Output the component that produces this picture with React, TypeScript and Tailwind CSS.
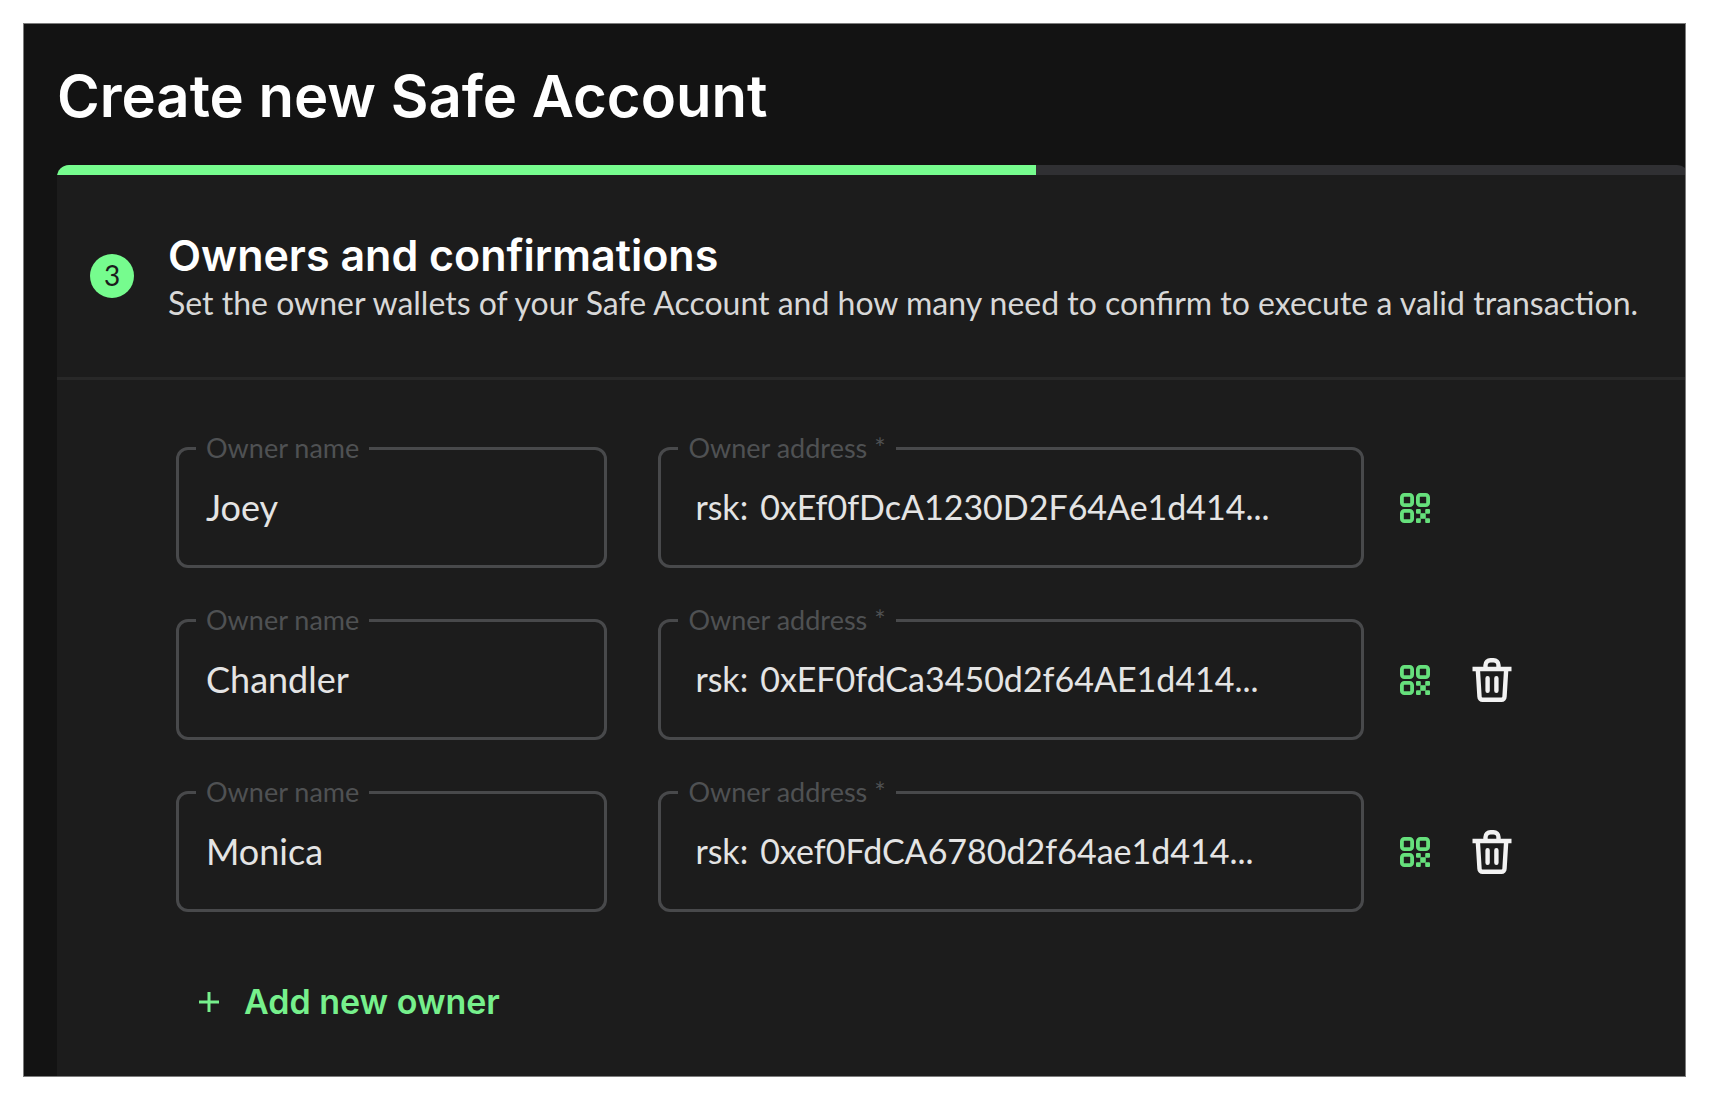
import React, { useState } from 'react';

interface Owner {
  id: number;
  name: string;
  address: string;
}

// ─── Data ──────────────────────────────────────────────────────

const STEP = 3;
const TOTAL_STEPS = 5;

const INITIAL_OWNERS: Owner[] = [
  { id: 1, name: 'Joey', address: '0xEf0fDcA1230D2F64Ae1d414...' },
  { id: 2, name: 'Chandler', address: '0xEF0fdCa3450d2f64AE1d414...' },
  { id: 3, name: 'Monica', address: '0xef0FdCA6780d2f64ae1d414...' },
];

// ─── Icons ─────────────────────────────────────────────────────

function QrIcon() {
  return (
    <svg viewBox="0 0 30 30" className="w-[30px] h-[30px]" aria-hidden="true">
      <g fill="none" stroke="currentColor" strokeWidth="3.8">
        <rect x="1.9" y="1.9" width="10.2" height="10.2" rx="2.4" />
        <rect x="17.9" y="1.9" width="10.2" height="10.2" rx="2.4" />
        <rect x="1.9" y="17.9" width="10.2" height="10.2" rx="2.4" />
      </g>
      <g fill="currentColor">
        <rect x="16" y="16" width="4.8" height="4.8" rx="1" />
        <rect x="25.2" y="16" width="4.8" height="4.8" rx="1" />
        <rect x="20.2" y="20.2" width="5.6" height="5.6" />
        <rect x="16" y="25.2" width="4.8" height="4.8" rx="1" />
        <rect x="25.2" y="25.2" width="4.8" height="4.8" rx="1" />
      </g>
    </svg>
  );
}

function TrashIcon() {
  return (
    <svg viewBox="0 0 40 44" className="w-10 h-11" fill="none" stroke="currentColor" strokeWidth="4.4" strokeLinejoin="round" aria-hidden="true">
      <path d="M0.5 11h39" />
      <path d="M13.5 11V7.200a5 5 0 0 1 5-5h3a5 5 0 0 1 5 5V11" />
      <path d="M5.800 11l1.700 27.800a3 3 0 0 0 3 3h19a3 3 0 0 0 3-3L34.200 11" />
      <path strokeLinecap="round" d="M15.600 20.200v12.600M24.400 20.200v12.600" />
    </svg>
  );
}

// ─── Field ─────────────────────────────────────────────────────

interface FieldProps {
  id: string;
  label: string;
  value: string;
  prefix?: string;
  className: string;
  onChange: (value: string) => void;
}

function Field({ id, label, value, prefix, className, onChange }: FieldProps) {
  return (
    <fieldset className={`min-w-0 rounded-xl border-3 border-[#48494b] focus-within:border-[#76fc8e] ${className}`}>
      <legend className="ml-[17px] px-[10px] text-[27px] leading-8 text-[#4f5153]">
        <label htmlFor={id}>{label}</label>
      </legend>
      <div className={`flex items-center gap-3 pr-6 pb-4 text-[#e4e4e4] ${prefix ? 'pl-[34px] text-[34px]' : 'pl-[27px] text-[36px]'}`}>
        {prefix && <span>{prefix}</span>}
        <input
          id={id}
          type="text"
          value={value}
          onChange={(e) => onChange(e.target.value)}
          className="flex-1 min-w-0 h-[85px] bg-transparent outline-none"
        />
      </div>
    </fieldset>
  );
}

// ─── Page ──────────────────────────────────────────────────────

export default function App() {
  const [owners, setOwners] = useState(INITIAL_OWNERS);

  const update = (id: number, patch: Partial<Owner>) =>
    setOwners(owners.map((o) => (o.id === id ? { ...o, ...patch } : o)));

  const addOwner = () =>
    setOwners([...owners, { id: Date.now(), name: '', address: '' }]);

  return (
    <div className="min-h-screen flex bg-white pt-[23px] pl-[23px] pr-6 pb-[19px] font-['Lato',sans-serif]">
      <main className="flex-1 min-w-0 flex flex-col overflow-hidden border border-[#7c7c7c] bg-[#131313] pl-[33px]">
        <h1 className="pt-9 pb-[33px] font-['Inter',sans-serif] text-[58px] leading-[72px] font-semibold text-white">
          Create new Safe Account
        </h1>

        <section className="flex-1 -mr-1 overflow-hidden rounded-t-xl bg-[#1c1c1c]">
          {/* Progress */}
          <div className="h-[10px] bg-[#303033]">
            <div className="h-full bg-[#76fc8e]" style={{ width: `${(STEP / TOTAL_STEPS) * 100}%` }} />
          </div>

          {/* Step header */}
          <header className="flex items-center gap-[34px] h-[205px] pl-[33px] pr-8 border-b-3 border-[#282828]">
            <span className="w-11 h-11 pb-0.5 shrink-0 rounded-full bg-[#76fc8e] flex items-center justify-center text-[28px] leading-none text-[#1c1c1c]">
              {STEP}
            </span>
            <div className="pt-0.5">
              <h2 className="font-['Inter',sans-serif] text-[43px] leading-[52px] font-semibold text-white">
                Owners and confirmations
              </h2>
              <p className="text-[32px] leading-[44px] text-[#d8d8d8]">
                Set the owner wallets of your Safe Account and how many need to confirm to execute a valid transaction.
              </p>
            </div>
          </header>

          {/* Owners */}
          <div className="pt-[52px] pl-[119px] pr-[141px]">
            <div className="flex flex-col gap-9">
              {owners.map((owner, index) => (
                <div key={owner.id} className="flex">
                  <Field
                    id={`name-${owner.id}`}
                    label="Owner name"
                    value={owner.name}
                    className="flex-[76]"
                    onChange={(name) => update(owner.id, { name })}
                  />
                  <Field
                    id={`address-${owner.id}`}
                    label="Owner address *"
                    prefix="rsk:"
                    value={owner.address}
                    className="flex-[125] ml-[51px]"
                    onChange={(address) => update(owner.id, { address })}
                  />
                  <div className="w-[148px] shrink-0 ml-9 pt-4 flex items-center gap-[42px]">
                    <button type="button" aria-label="Scan QR code" className="text-[#66e07c] cursor-pointer">
                      <QrIcon />
                    </button>
                    {index > 0 && (
                      <button
                        type="button"
                        aria-label="Remove owner"
                        onClick={() => setOwners(owners.filter((o) => o.id !== owner.id))}
                        className="text-[#f2f2f2] cursor-pointer"
                      >
                        <TrashIcon />
                      </button>
                    )}
                  </div>
                </div>
              ))}
            </div>

            <button
              type="button"
              onClick={addOwner}
              className="mt-[66px] ml-[22px] flex items-center gap-6 font-['Inter',sans-serif] text-[34px] leading-[48px] font-semibold text-[#76f08c] cursor-pointer"
            >
              <svg viewBox="0 0 22 22" className="w-[22px] h-[22px]" fill="none" stroke="currentColor" strokeWidth="3" aria-hidden="true">
                <path d="M11 1v20M1 11h20" />
              </svg>
              Add new owner
            </button>
          </div>
        </section>
      </main>
    </div>
  );
}
